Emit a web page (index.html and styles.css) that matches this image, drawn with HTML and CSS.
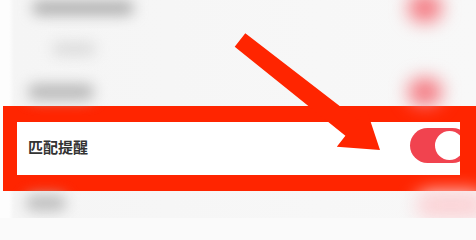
FILE: index.html
```html
<!DOCTYPE html>
<html lang="zh-CN">
<head>
<meta charset="utf-8">
<title>匹配提醒</title>
<link rel="stylesheet" href="styles.css">
</head>
<body>
<div class="screen">
  <div class="row row-a">
    <span class="ghost-text ghost-a"></span>
    <span class="ghost-toggle"></span>
  </div>
  <div class="row row-b">
    <span class="ghost-text ghost-b"></span>
  </div>
  <div class="row row-c">
    <span class="ghost-text ghost-c"></span>
    <span class="ghost-toggle"></span>
  </div>
  <div class="row highlight">
    <span class="label">匹配提醒</span>
    <span class="switch"><span class="knob"></span></span>
  </div>
  <div class="row row-d">
    <span class="ghost-text ghost-d"></span>
    <span class="ghost-toggle ghost-faint"></span>
  </div>

  <svg class="arrow" width="476" height="218" viewBox="0 0 476 218" aria-hidden="true">
    <polygon points="245.3,33.2 357.8,119.9 366.4,108.9 380,150 336.8,146.7 345.4,135.7 234.7,46.8" fill="#ff2500"/>
  </svg>
</div>
</body>
</html>
```

FILE: styles.css
```css
html, body {
  margin: 0;
  padding: 0;
}

body {
  width: 476px;
  height: 218px;
  overflow: hidden;
  background: #fafafa;
  font-family: "Noto Sans CJK SC", "Noto Sans", sans-serif;
}

.screen {
  position: relative;
  width: 476px;
  height: 218px;
  overflow: hidden;
  background: linear-gradient(to right, #fdfdfd 0, #fdfdfd 9px, #f5f5f5 14px, #f8f8f8 100%);
}

.row {
  display: flex;
  align-items: center;
  box-sizing: border-box;
}

.row-a {
  height: 16px;
  padding-left: 32px;
}

.row-b {
  height: 66px;
  padding-left: 52px;
}

.row-c {
  height: 20px;
  padding-left: 28px;
  margin-bottom: 4px;
}

.row-d {
  height: 27px;
  padding-left: 26px;
}

.ghost-text {
  display: block;
  height: 14px;
  border-radius: 7px;
  filter: blur(7px);
}

.ghost-a {
  width: 102px;
  background: #adadad;
}

.ghost-b {
  width: 44px;
  background: #dcdcdc;
}

.ghost-c {
  width: 66px;
  height: 16px;
  background: #b8b8b8;
}

.ghost-d {
  width: 40px;
  height: 16px;
  background: #bdbdbd;
  margin-top: -4px;
}

.ghost-toggle {
  display: block;
  width: 34px;
  height: 28px;
  margin-left: auto;
  margin-right: 34px;
  border-radius: 14px;
  background: #f47a82;
  filter: blur(9px);
}

.ghost-faint {
  background: #fbd3d6;
  width: 70px;
  margin-right: -10px;
}

.highlight {
  width: 473px;
  height: 85px;
  margin-left: 3px;
  border-style: solid;
  border-color: #ff2500;
  border-width: 16px 16px 16px 14px;
  background: #ffffff;
  padding-left: 11px;
  overflow: hidden;
}

.label {
  font-size: 15px;
  font-weight: 700;
  color: #333333;
  line-height: 1;
  margin-top: -4px;
}

.switch {
  position: relative;
  display: block;
  flex: none;
  width: 60px;
  height: 35px;
  margin-left: auto;
  margin-right: -10px;
  margin-top: -6px;
  border-radius: 18px;
  background: #f1434f;
}

.knob {
  position: absolute;
  top: 3px;
  left: 25px;
  width: 29px;
  height: 29px;
  border-radius: 50%;
  background: #ffffff;
}

.arrow {
  position: absolute;
  left: 0;
  top: 0;
}
```
